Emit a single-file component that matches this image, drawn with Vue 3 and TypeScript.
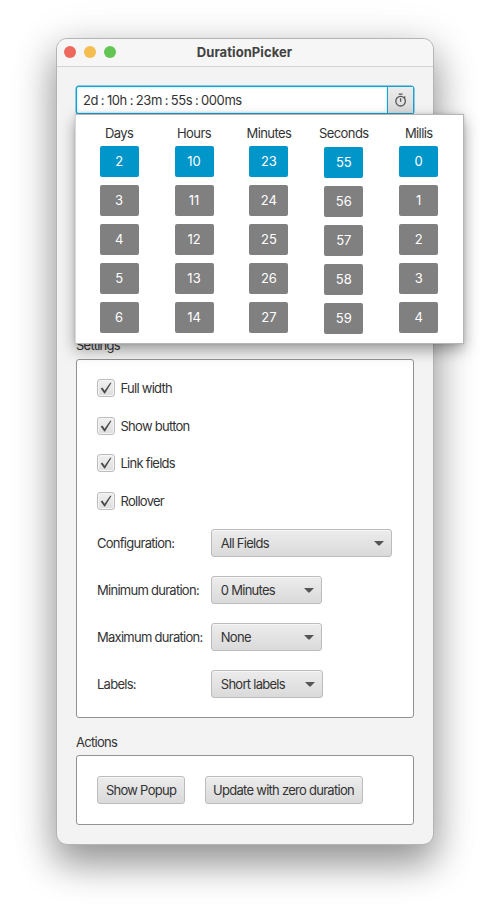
<script setup lang="ts">
import { ref } from 'vue'

interface Column {
  label: string
  values: number[]
  nudged?: boolean
}

interface Choice {
  label: string
  value: string
  size: 'wide' | 'normal' | 'fit'
}

const columns: Column[] = [
  { label: 'Days', values: [2, 3, 4, 5, 6] },
  { label: 'Hours', values: [10, 11, 12, 13, 14] },
  { label: 'Minutes', values: [23, 24, 25, 26, 27] },
  { label: 'Seconds', values: [55, 56, 57, 58, 59], nudged: true },
  { label: 'Millis', values: [0, 1, 2, 3, 4] },
]

const options = ref([
  { label: 'Full width', checked: true },
  { label: 'Show button', checked: true },
  { label: 'Link fields', checked: true },
  { label: 'Rollover', checked: true },
])

const choices: Choice[] = [
  { label: 'Configuration:', value: 'All Fields', size: 'wide' },
  { label: 'Minimum duration:', value: '0 Minutes', size: 'normal' },
  { label: 'Maximum duration:', value: 'None', size: 'normal' },
  { label: 'Labels:', value: 'Short labels', size: 'fit' },
]
</script>

<template>
  <main class="desktop">
    <section class="window">
      <header class="titlebar">
        <div class="lights">
          <span class="light close"></span>
          <span class="light minimize"></span>
          <span class="light zoom"></span>
        </div>
        <h1 class="title">DurationPicker</h1>
      </header>

      <div class="content">
        <div class="picker">
          <div class="field">2d : 10h : 23m : 55s : 000ms</div>
          <button class="trigger" aria-label="Toggle popup">
            <svg width="14" height="15" viewBox="0 0 14 15" fill="none" stroke="#555" stroke-width="1.3">
              <circle cx="6.6" cy="8.2" r="4.8" />
              <path d="M4.7 1.2h3.8M6.6 5.3v3.4M10.1 4.7l1.2-1.2" />
            </svg>
          </button>

          <div class="popup">
            <div v-for="col in columns" :key="col.label" class="column">
              <div class="column-label">{{ col.label }}</div>
              <div class="cells" :class="{ nudged: col.nudged }">
                <div v-for="(v, i) in col.values" :key="v" class="cell" :class="{ selected: i === 0 }">{{ v }}</div>
              </div>
            </div>
          </div>
        </div>

        <h2 class="heading settings-heading">Settings</h2>
        <div class="panel settings">
          <label v-for="o in options" :key="o.label" class="option" @click="o.checked = !o.checked">
            <span class="box">
              <svg v-if="o.checked" width="12" height="12" viewBox="0 0 12 12">
                <path d="M0.7 6.4L2.4 5.6L4.6 8.8L10.2 0.8L11.5 0.8L5 11.6L4.3 11.6Z" fill="#4a4a4a" />
              </svg>
            </span>
            <span>{{ o.label }}</span>
          </label>
          <div class="choices">
            <div v-for="c in choices" :key="c.label" class="choice">
              <span class="choice-label">{{ c.label }}</span>
              <div class="combo" :class="c.size">
                <span>{{ c.value }}</span>
                <svg width="10" height="5" viewBox="0 0 10 5"><path d="M0 0h10L5.8 4.3Q5 5 4.2 4.3Z" fill="#555" /></svg>
              </div>
            </div>
          </div>
        </div>

        <h2 class="heading actions-heading">Actions</h2>
        <div class="panel actions">
          <button class="button show">Show Popup</button>
          <button class="button update">Update with zero duration</button>
        </div>
      </div>
    </section>
  </main>
</template>

<style>
body {
  margin: 0;
  background: #fff;
}
</style>

<style scoped>
.desktop {
  box-sizing: border-box;
  width: 490px;
  height: 919px;
  padding: 38px 56px 0;
  overflow: hidden;
  background: #fff;
  color: #333;
  font: 13px/16px Inter, "Liberation Sans", sans-serif;
  letter-spacing: -0.73px;
}
.window {
  box-sizing: border-box;
  width: 378px;
  height: 807px;
  border: 1px solid #b4b4b4;
  border-radius: 11px;
  background: #f3f3f3;
  box-shadow: 0 18px 36px 1px rgba(0, 0, 0, 0.36), 0 8px 50px rgba(0, 0, 0, 0.13);
}
.titlebar {
  box-sizing: border-box;
  display: grid;
  grid-template-columns: 60px 1fr 60px;
  align-items: center;
  height: 28px;
  padding-bottom: 1px;
  border-bottom: 1px solid #d4d4d4;
  border-radius: 10px 10px 0 0;
  background: #f6f6f6;
}
.lights {
  display: flex;
  gap: 8px;
  padding-left: 7px;
}
.light {
  flex: none;
  width: 12px;
  height: 12px;
  border-radius: 50%;
}
.close { background: #ed695e; }
.minimize { background: #f5bd4f; }
.zoom { background: #62c554; }
.title {
  margin: 0 0 0 -1px;
  color: #424242;
  font-size: 13px;
  font-weight: 700;
  letter-spacing: 0.07px;
  text-align: center;
}
.content {
  display: flex;
  flex-direction: column;
  padding: 19px 19px 0;
}
.picker {
  position: relative;
  box-sizing: border-box;
  display: flex;
  height: 28px;
  border: 1px solid #1ba1d2;
  border-radius: 3px;
  background: #fff;
  box-shadow: 0 0 0 0.5px #1ba1d2;
}
.field {
  flex: 1;
  padding: 5px 6px;
  border-radius: 2px;
  box-shadow: inset 0 0 2px 1px #d6eff8;
  letter-spacing: -0.42px;
  word-spacing: -0.45px;
}
.trigger {
  display: flex;
  align-items: center;
  justify-content: center;
  width: 26px;
  padding: 0;
  border: 0;
  border-left: 1px solid #1ba1d2;
  background: linear-gradient(#ececec, #dadada);
}
.popup {
  position: absolute;
  z-index: 1;
  top: 27px;
  left: -2px;
  box-sizing: border-box;
  display: flex;
  width: 389px;
  height: 230px;
  padding: 10px 0 0 5.7px;
  border: 1px solid #b5b5b5;
  border-left-color: #d8d8d8;
  background: #fff;
  box-shadow: 0 6px 14px rgba(0, 0, 0, 0.36), 0 0 3px rgba(0, 0, 0, 0.12);
}
.column {
  display: flex;
  flex: none;
  flex-direction: column;
  align-items: center;
  width: 74.9px;
}
.column-label {
  height: 16px;
  margin-bottom: 5px;
  letter-spacing: -0.6px;
}
.cells {
  display: flex;
  flex-direction: column;
  gap: 8px;
}
.cells.nudged { padding-top: 0.5px; }
.cell {
  width: 39px;
  height: 31px;
  border-radius: 2px;
  background: #808080;
  color: #fff;
  line-height: 31px;
  letter-spacing: 0;
  text-align: center;
}
.cell.selected { background: #0096c9; }
.heading {
  margin: 0;
  font-size: 13px;
  font-weight: 400;
  line-height: 16px;
}
.settings-heading { margin-top: 223px; }
.actions-heading { margin-top: 16px; }
.panel {
  box-sizing: border-box;
  border: 1px solid #929292;
  border-radius: 3px;
  background: #fff;
}
.settings {
  height: 359px;
  margin-top: 6px;
  padding: 19.3px 20px 0;
}
.option {
  display: flex;
  align-items: center;
  gap: 5.5px;
  height: 18px;
  margin-bottom: 19.5px;
}
.box {
  box-sizing: border-box;
  display: flex;
  align-items: center;
  justify-content: center;
  width: 18px;
  height: 18px;
  border: 1px solid #bdbdbd;
  border-radius: 3px;
  background: linear-gradient(#f0f0f0, #dedede);
  box-shadow: inset 0 0 0 1px #f4f4f4;
}
.choices {
  display: grid;
  gap: 19px;
}
.choice {
  display: grid;
  grid-template-columns: 114.3px 1fr;
  align-items: center;
}
.combo {
  box-sizing: border-box;
  display: flex;
  align-items: center;
  justify-content: space-between;
  height: 28px;
  padding: 0 7.5px 0 8.5px;
  border: 1px solid #bcbcbc;
  border-radius: 3px;
  background: linear-gradient(#ececec, #dadada);
  box-shadow: inset 0 1px #f6f6f6;
}
.wide { width: 181px; }
.normal { width: 111px; }
.fit { width: 112px; }
.actions {
  display: flex;
  gap: 19.5px;
  height: 70px;
  margin-top: 5px;
  padding: 20px;
}
.button {
  height: 28px;
  padding: 0;
  border: 1px solid #bcbcbc;
  border-radius: 3px;
  background: linear-gradient(#ececec, #dadada);
  box-shadow: inset 0 1px #f6f6f6;
  color: #333;
  font: inherit;
  letter-spacing: inherit;
}
.show { width: 88px; }
.update { width: 158px; }
</style>
